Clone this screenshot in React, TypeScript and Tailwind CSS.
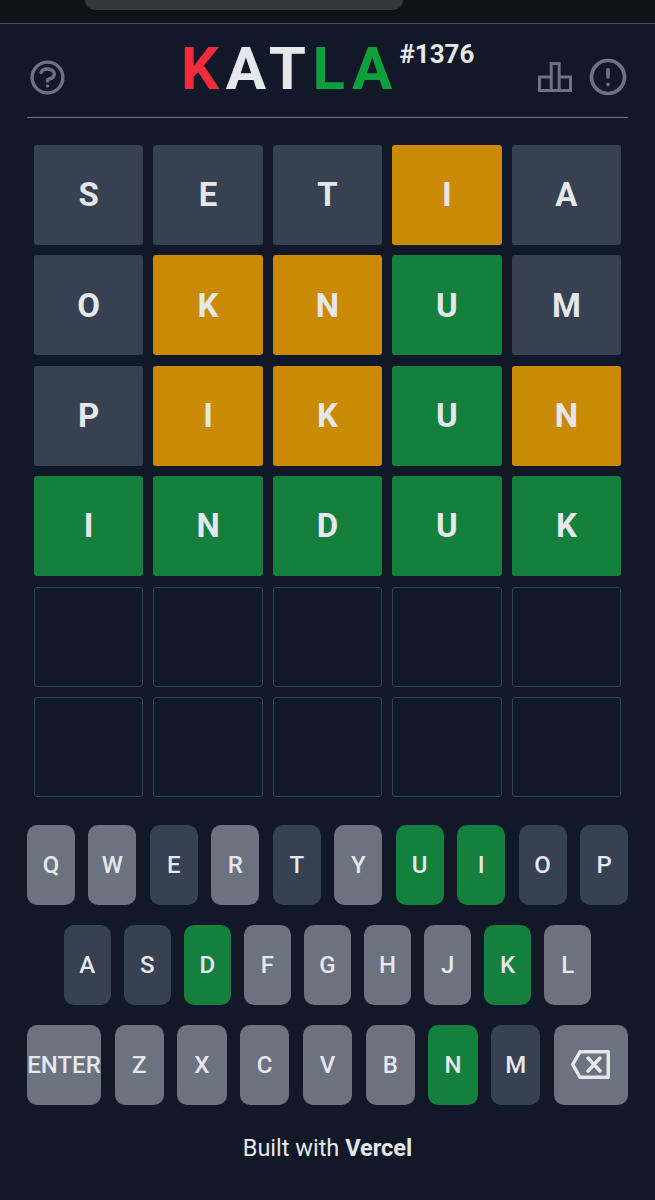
import { HiOutlineExclamationCircle, HiOutlineQuestionMarkCircle } from 'react-icons/hi';

type Tile = 'absent' | 'present' | 'correct';
type KeyState = 'idle' | 'absent' | 'correct';

const ROWS: [string, Tile[]][] = [
  ['SETIA', ['absent', 'absent', 'absent', 'present', 'absent']],
  ['OKNUM', ['absent', 'present', 'present', 'correct', 'absent']],
  ['PIKUN', ['absent', 'present', 'present', 'correct', 'present']],
  ['INDUK', ['correct', 'correct', 'correct', 'correct', 'correct']],
];

const TILE_BG: Record<Tile, string> = {
  absent: 'bg-[#374151]',
  present: 'bg-[#ca8a04]',
  correct: 'bg-[#15803d]',
};

const KEY_BG: Record<KeyState, string> = {
  idle: 'bg-[#6b7280]',
  absent: 'bg-[#374151]',
  correct: 'bg-[#15803d]',
};

const ABSENT = 'SETOMPA';
const CORRECT = 'UIDKN';

function keyState(letter: string): KeyState {
  if (CORRECT.includes(letter)) return 'correct';
  if (ABSENT.includes(letter)) return 'absent';
  return 'idle';
}

function Key({ label, wide, children }: { label: string; wide?: boolean; children?: React.ReactNode }) {
  const state = label.length === 1 ? keyState(label) : 'idle';
  return (
    <div
      className={`flex h-[80px] items-center justify-center rounded-[10px] text-[24px] font-medium text-[#e5e7eb] ${KEY_BG[state]} ${wide ? 'w-[74px]' : 'flex-1'}`}
    >
      {children ?? label}
    </div>
  );
}

function KeyRow({ letters, className }: { letters: string; className: string }) {
  return (
    <div className={`flex justify-center gap-[13.5px] ${className}`}>
      {letters.split('').map((l) => (
        <Key key={l} label={l} />
      ))}
    </div>
  );
}

export default function App() {
  return (
    <div className="flex h-[1200px] w-full flex-col bg-[#111827] font-['Roboto',sans-serif]">
      {/* phone chrome above the page */}
      <div className="h-[24px] shrink-0 border-b border-[#4b5056] bg-[#0e1317]">
        <div className="ml-[85px] h-[10px] w-[318px] rounded-b-[14px] bg-[#33383d]" />
      </div>

      <header className="mx-[27px] flex h-[93.5px] shrink-0 items-start border-b border-[#6b7280]">
        <div className="w-[157px] shrink-0">
          <HiOutlineQuestionMarkCircle className="mt-[32.5px] -ml-[0.5px] text-[#6b7280]" size={41} />
        </div>
        <div className="flex items-start">
          <h1 className="mt-[10px] -ml-[3px] text-[60px] leading-[70px] font-bold tracking-[6.5px] text-[#e5e7eb]">
            <span className="text-[#ef2b3c]">K</span>AT<span className="text-[#0ea03c]">LA</span>
          </h1>
          <span className="mt-[14px] ml-[0.5px] text-[26px] leading-[32px] font-bold text-[#e5e7eb]">#1376</span>
        </div>
        <div className="mt-[31px] -mr-[1.5px] ml-auto flex items-start gap-[14px] text-[#6b7280]">
          <svg className="mt-[7px]" width="34" height="30" viewBox="0 0 34 30" fill="none" stroke="currentColor" strokeWidth="3">
            <path d="M1.5 28.5V15H13.2V28.5ZM13.2 15V1.5H21.2V28.5M21.2 15H32.5V28.5H1.5" />
          </svg>
          <HiOutlineExclamationCircle size={44} />
        </div>
      </header>

      <div className="mx-[34px] mt-[27.5px] flex flex-col gap-[10.4px]">
        {[0, 1, 2, 3, 4, 5].map((r) => (
          <div key={r} className="grid grid-cols-5 gap-x-[10.2px]">
            {[0, 1, 2, 3, 4].map((c) => {
              const row = ROWS[r];
              return row ? (
                <div
                  key={c}
                  className={`flex h-[100px] items-center justify-center rounded-[3px] text-[33px] font-bold text-[#e5e7eb] ${TILE_BG[row[1][c]]}`}
                >
                  {row[0][c]}
                </div>
              ) : (
                <div key={c} className="h-[100px] rounded-[3px] border border-[#374151]" />
              );
            })}
          </div>
        ))}
      </div>

      <div className="mt-[28px] flex flex-col gap-[20px]">
        <KeyRow letters="QWERTYUIOP" className="mx-[27px]" />
        <KeyRow letters="ASDFGHJKL" className="mx-[64px]" />
        <div className="mx-[27px] flex gap-[13.5px]">
          <Key label="ENTER" wide />
          {'ZXCVBNM'.split('').map((l) => (
            <Key key={l} label={l} />
          ))}
          <Key label="DELETE" wide>
            <svg width="39" height="29" viewBox="0 0 39 29" fill="none" stroke="currentColor" strokeWidth="3.5" strokeLinejoin="round" strokeLinecap="round">
              <path d="M9 1.75H37.25V27.25H9L1.75 14.5Z" />
              <path d="M17 8L29 21M29 8L17 21" />
            </svg>
          </Key>
        </div>
      </div>

      <p className="mt-[28px] text-center text-[23.5px] leading-[30px] text-[#e5e7eb]">
        Built with <span className="font-bold">Vercel</span>
      </p>
    </div>
  );
}
